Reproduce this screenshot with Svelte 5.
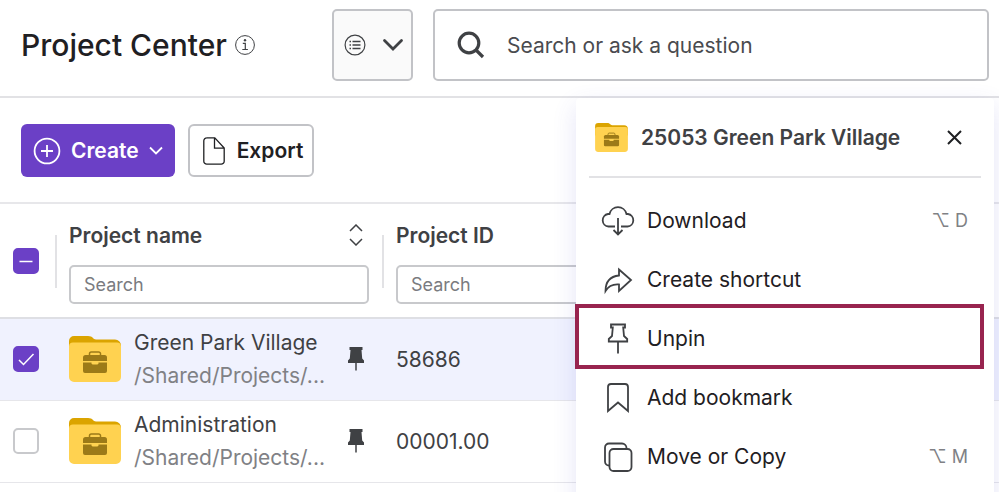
<script lang="ts">
	type MenuItem = { icon: string; label: string; keys?: string };

	let rows = $state([
		{ name: "Green Park Village", path: "/Shared/Projects/...", id: "58686", selected: true },
		{ name: "Administration", path: "/Shared/Projects/...", id: "00001.00", selected: false },
	]);

	let allSelected = $derived(rows.every((r) => r.selected));
	let someSelected = $derived(!allSelected && rows.some((r) => r.selected));

	let menuOpen = $state(true);
	let highlighted = "Unpin";

	const menuItems: MenuItem[] = [
		{ icon: "download", label: "Download", keys: "⌥ D" },
		{ icon: "shortcut", label: "Create shortcut" },
		{ icon: "pin", label: "Unpin" },
		{ icon: "bookmark", label: "Add bookmark" },
		{ icon: "copy", label: "Move or Copy", keys: "⌥ M" },
	];

	function toggleAll() {
		const next = !allSelected;
		for (const row of rows) row.selected = next;
	}
</script>

{#snippet folder()}
	<svg class="folder" viewBox="0 0 52 46" aria-hidden="true">
		<path d="M5 0h14c5 0 5 3.500 8 3.500h19a6 6 0 0 1 6 6V20H0V5a5 5 0 0 1 5-5z" fill="#dba400" />
		<path d="M4 6.500h44a4 4 0 0 1 4 4V41a5 5 0 0 1-5 5H5a5 5 0 0 1-5-5V10.500a4 4 0 0 1 4-4z" fill="#ffd250" />
		<path d="M20.500 20v-2.200a1.800 1.800 0 0 1 1.800-1.800h7.400a1.800 1.800 0 0 1 1.800 1.800V20" fill="none" stroke="#9c7a18" stroke-width="1.500" />
		<path d="M16.500 19h19a2.500 2.500 0 0 1 2.500 2.500V25H14v-3.500a2.500 2.500 0 0 1 2.500-2.500z" fill="#9c7a18" />
		<path d="M14 26.500h8.500v.8c0 .7.500 1.200 1.200 1.200h4.600c.7 0 1.200-.5 1.200-1.200v-.8H38V35a2 2 0 0 1-2 2H16a2 2 0 0 1-2-2z" fill="#9c7a18" />
	</svg>
{/snippet}

{#snippet pinned()}
	<svg class="pinned" width="16" height="24" viewBox="0 0 16 24" role="img" aria-label="Pinned">
		<path d="M1.500 0h13v3h-1l.7 8.500 1.800 2V16H0v-2.500l1.800-2L2.500 3h-1z" fill="#3f4144" />
		<path d="M8 15v8.500" stroke="#3f4144" stroke-width="1.500" />
	</svg>
{/snippet}

{#snippet menuIcon(name: string)}
	<svg class="menu-icon" width="34" height="34" viewBox="0 0 34 34" aria-hidden="true">
		{#if name === "download"}
			<path d="M14 22.500H7.500a6.300 6.300 0 0 1-.5-12.500h1.500a8.700 8.700 0 0 1 17 0H27a6.300 6.300 0 0 1-.5 12.500H20M17 14v16M12.500 26l4.500 4.500 4.500-4.500" />
		{:else if name === "shortcut"}
			<path d="M18 6.500 30 17 18 28v-6.500c-6-.5-10.500 1.500-13.500 6.500C4.500 19 9 13.500 18 12.500z" />
		{:else if name === "pin"}
			<path d="M10 2.500h14v3h-1.800l.8 8.500 3.200 3v2.500H7.800V17l3.200-3 .8-8.500H10zM17 19.500V31.500" />
		{:else if name === "bookmark"}
			<path d="M7 30V6a3 3 0 0 1 3-3h14a3 3 0 0 1 3 3v24l-10-8.500z" />
		{:else}
			<rect x="8.500" y="9" width="22" height="22" rx="4" />
			<path d="M8.500 25.500h-.5a4 4 0 0 1-4-4V7.500a4 4 0 0 1 4-4h13a4.500 4.500 0 0 1 4.500 4.500v1" />
		{/if}
	</svg>
{/snippet}

<div class="page">
	<header class="topbar">
		<div class="heading">
			<h1>Project Center</h1>
			<button class="info" type="button" aria-label="About Project Center">
				<svg width="20" height="20" viewBox="0 0 20 20" fill="none" stroke="#3f4144">
					<circle cx="10" cy="10" r="9.400" />
					<path d="M7.800 8.300h2.500v6M7.300 14.500h5.600" stroke-width="1.200" />
					<circle cx="10" cy="5.300" r="1.200" fill="#3f4144" stroke="none" />
				</svg>
			</button>
		</div>

		<button class="scope" type="button" aria-label="Search scope">
			<svg width="22" height="22" viewBox="0 0 22 22" fill="none" stroke="#3f4144">
				<circle cx="11" cy="11" r="9.900" stroke-width="1.200" />
				<path d="M8.500 7.500h8M8.500 11h8M8.500 14.500h8" stroke-width="1.300" />
				<path d="M5.500 7.500H7M5.500 11H7M5.500 14.500H7" stroke-width="1.300" />
			</svg>
			<svg width="22" height="14" viewBox="0 0 22 14" fill="none" stroke="#3f4144" stroke-width="2.800">
				<path d="m2.500 2.500 8.500 8.500 8.500-8.500" stroke-linecap="round" />
			</svg>
		</button>

		<label class="search">
			<svg width="28" height="28" viewBox="0 0 28 28" fill="none" stroke="#3f4144" stroke-width="3.200">
				<circle cx="12" cy="12" r="9.800" />
				<path d="m19 19 7 7" />
			</svg>
			<input type="text" placeholder="Search or ask a question" aria-label="Search or ask a question" />
		</label>
	</header>

	<div class="toolbar">
		<button class="btn btn-primary" type="button">
			<svg width="28" height="28" viewBox="0 0 28 28" fill="none" stroke="#fff" stroke-width="1.800">
				<circle cx="14" cy="14" r="12.400" />
				<path d="M14 8v12M8 14h12" />
			</svg>
			Create
			<svg class="caret" width="14" height="9" viewBox="0 0 14 9" fill="none" stroke="#fff" stroke-width="1.800">
				<path d="m1 1.500 6 6 6-6" />
			</svg>
		</button>
		<button class="btn btn-outline" type="button">
			<svg width="22" height="28" viewBox="0 0 22 28" fill="none" stroke="#1f2023" stroke-width="1.300">
				<path d="M3.500.8h8.300L21.200 11v13.200a3 3 0 0 1-3 3H3.800a3 3 0 0 1-3-3V3.800a3 3 0 0 1 3-3zM11.500 1v10.200H21" />
			</svg>
			Export
		</button>
	</div>

	<table>
		<colgroup>
			<col class="col-check" />
			<col class="col-name" />
			<col />
		</colgroup>
		<thead>
			<tr>
				<th>
					<span class="check">
						<input
							type="checkbox"
							aria-label="Select all projects"
							checked={allSelected}
							indeterminate={someSelected}
							onchange={toggleAll}
						/>
						<svg class="dash" width="26" height="26" viewBox="0 0 26 26"><path d="M6.500 13.500h13" /></svg>
					</span>
				</th>
				<th scope="col">
					<div class="col-head">
						<div class="col-body">
							<div class="col-title">
								<span>Project name</span>
								<button class="sort" type="button" aria-label="Sort by project name">
									<svg width="14" height="22" viewBox="0 0 14 22" fill="none" stroke="#3f4144" stroke-width="1.500">
										<path d="m1 7 6-6 6 6M1 15l6 6 6-6" />
									</svg>
								</button>
							</div>
							<input class="filter" type="text" placeholder="Search" aria-label="Filter by project name" />
						</div>
					</div>
				</th>
				<th scope="col">
					<div class="col-head">
						<div class="col-body">
							<div class="col-title"><span>Project ID</span></div>
							<input class="filter" type="text" placeholder="Search" aria-label="Filter by project ID" />
						</div>
					</div>
				</th>
			</tr>
		</thead>
		<tbody>
			{#each rows as row (row.id)}
				<tr class:selected={row.selected}>
					<td>
						<span class="check">
							<input type="checkbox" aria-label="Select {row.name}" bind:checked={row.selected} />
							<svg class="tick" width="26" height="26" viewBox="0 0 26 26"><path d="m6 14 4.500 4.500L20.500 8" /></svg>
						</span>
					</td>
					<td>
						<div class="project">
							{@render folder()}
							<div class="project-text">
								<div class="project-name">{row.name}</div>
								<div class="project-path">{row.path}</div>
							</div>
							{@render pinned()}
						</div>
					</td>
					<td class="project-id">{row.id}</td>
				</tr>
			{/each}
		</tbody>
	</table>

	{#if menuOpen}
		<section class="menu" aria-label="Project actions">
			<div class="menu-head">
				{@render folder()}
				<h2>25053 Green Park Village</h2>
				<button class="close" type="button" aria-label="Close" onclick={() => (menuOpen = false)}>
					<svg width="15" height="15" viewBox="0 0 15 15" stroke="#1f2023" stroke-width="2">
						<path d="m1 1 13 13M14 1 1 14" />
					</svg>
				</button>
			</div>
			<ul>
				{#each menuItems as item (item.label)}
					<li class:highlight={item.label === highlighted}>
						<button type="button">
							{@render menuIcon(item.icon)}
							<span class="menu-label">{item.label}</span>
							{#if item.keys}<kbd>{item.keys}</kbd>{/if}
						</button>
					</li>
				{/each}
			</ul>
		</section>
	{/if}
</div>

<style>
	:global(body) {
		margin: 0;
		background: #fff;
	}

	.page {
		position: relative;
		min-height: 100vh;
		overflow: hidden;
		font-family: Inter, "Liberation Sans", sans-serif;
		font-size: 21px;
		color: #3f4144;
	}

	.page * {
		box-sizing: border-box;
	}

	button,
	input {
		font: inherit;
		color: inherit;
		margin: 0;
	}

	button {
		cursor: pointer;
	}

	svg {
		display: block;
		flex: none;
	}

	h1,
	h2 {
		margin: 0;
	}

	.topbar {
		display: flex;
		align-items: flex-start;
		gap: 20px;
		height: 98px;
		padding: 9px 10px 0 21px;
		border-bottom: 2px solid #e2e2e5;
	}

	.heading {
		display: flex;
		align-items: center;
		gap: 8px;
		width: 291px;
		height: 72px;
	}

	h1 {
		font-size: 30px;
		font-weight: 500;
		color: #1f2023;
		white-space: nowrap;
	}

	.info,
	.sort,
	.close {
		padding: 0;
		border: 0;
		background: none;
	}

	.scope {
		display: flex;
		align-items: center;
		justify-content: space-between;
		width: 81px;
		height: 72px;
		padding: 0 7px 0 10px;
		border: 2px solid #c2c3c7;
		border-radius: 5px;
		background: #fafafa;
	}

	.search {
		display: flex;
		flex: 1;
		align-items: center;
		gap: 22px;
		height: 72px;
		padding: 0 22px;
		border: 2px solid #c2c3c7;
		border-radius: 5px;
	}

	.search input {
		flex: 1;
		min-width: 0;
		padding: 0;
		border: 0;
		outline: none;
		background: none;
	}

	.search input::placeholder {
		color: #4a4b4f;
		opacity: 1;
	}

	.toolbar {
		display: flex;
		gap: 13px;
		padding: 26px 21px 25px;
		border-bottom: 2px solid #e7e7ea;
	}

	.btn {
		display: flex;
		align-items: center;
		height: 53px;
		border-radius: 6px;
		font-weight: 600;
	}

	.btn-primary {
		gap: 10px;
		padding: 0 12px;
		border: 0;
		background: #6b40c6;
		color: #fff;
	}

	.btn-outline {
		gap: 12px;
		padding: 0 9px 0 13px;
		border: 2px solid #c2c3c7;
		background: #fff;
		color: #1f2023;
	}

	table {
		width: 100%;
		border-collapse: collapse;
		table-layout: fixed;
	}

	.col-check {
		width: 55px;
	}

	.col-name {
		width: 327px;
	}

	th,
	td {
		padding: 0;
		text-align: left;
		font-weight: 400;
		vertical-align: middle;
	}

	thead tr {
		height: 114px;
		border-bottom: 2px solid #dedfe4;
	}

	tbody tr {
		height: 82px;
		border-bottom: 1px solid #e6e6ea;
	}

	.selected {
		background: #f0f2fe;
	}

	.check {
		display: grid;
		width: 26px;
		height: 26px;
		margin-left: 13px;
	}

	.check > * {
		grid-area: 1 / 1;
	}

	.check input {
		width: 26px;
		height: 26px;
		appearance: none;
		border: 2px solid #c8c9cc;
		border-radius: 5px;
		background: #fff;
	}

	.check input:checked,
	.check input:indeterminate {
		border-color: #6b40c6;
		background: #6b40c6;
	}

	.check svg {
		visibility: hidden;
		pointer-events: none;
		fill: none;
		stroke: #fff;
		stroke-width: 1.5;
	}

	.check input:checked + .tick,
	.check input:indeterminate + .dash {
		visibility: visible;
	}

	.col-head {
		display: flex;
		align-items: center;
		padding: 2px 13px 0 0;
	}

	.col-head::before {
		content: "";
		flex: none;
		width: 2px;
		height: 53px;
		margin-right: 12px;
		background: #e2e2e5;
	}

	.col-body {
		flex: 1;
	}

	.col-title {
		display: flex;
		align-items: center;
		justify-content: space-between;
		height: 32px;
		margin-bottom: 14px;
		padding-right: 6px;
		font-weight: 600;
	}

	.filter {
		display: block;
		width: 100%;
		height: 39px;
		padding: 0 13px;
		border: 2px solid #c8c9cc;
		border-radius: 5px;
		background: #fff;
		font-size: 18px;
	}

	.filter::placeholder {
		color: #7a7b80;
		opacity: 1;
	}

	.project {
		display: flex;
		align-items: center;
		padding: 0 18px 0 14px;
		line-height: 33px;
	}

	.project .folder {
		width: 52px;
		height: 46px;
		margin-right: 13px;
	}

	.project-text {
		flex: 1;
		white-space: nowrap;
	}

	.project-path {
		color: #808185;
	}

	.project-id {
		padding-left: 14px;
	}

	.menu {
		position: absolute;
		top: 98px;
		right: 5px;
		width: 418px;
		padding: 0 0 40px;
		border-radius: 4px;
		background: #fff;
		box-shadow: 0 8px 24px rgba(70, 70, 200, 0.14);
	}

	.menu-head {
		display: flex;
		align-items: center;
		height: 80px;
		margin: 0 13px;
		padding: 0 19px 0 6px;
		border-bottom: 2px solid #e2e2e5;
	}

	.menu-head .folder {
		width: 33px;
		height: 29px;
		margin-right: 13px;
	}

	h2 {
		flex: 1;
		font-size: 21px;
		font-weight: 600;
		white-space: nowrap;
	}

	.menu ul {
		margin: 0;
		padding: 13px 0 0;
		list-style: none;
	}

	.menu li {
		position: relative;
	}

	.menu li button {
		display: flex;
		align-items: center;
		gap: 12px;
		width: 100%;
		height: 59px;
		padding: 0 26px 0 25px;
		border: 0;
		background: none;
		color: #1f2023;
		text-align: left;
	}

	.menu-icon {
		fill: none;
		stroke: #3f4144;
		stroke-width: 1.8;
	}

	.menu-label {
		flex: 1;
	}

	kbd {
		font-family: inherit;
		font-size: 18px;
		color: #808185;
	}

	/* frame drawn around the active entry */
	.highlight::after {
		content: "";
		position: absolute;
		inset: -5px 10px -1px -1px;
		border: 4px solid #98244f;
		pointer-events: none;
	}
</style>
